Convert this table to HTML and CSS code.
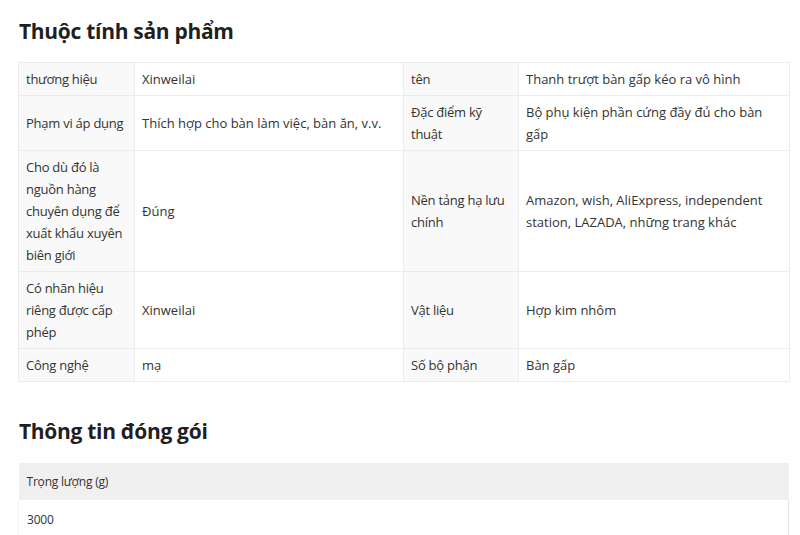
FILE: index.html
```html
<!DOCTYPE html>
<html lang="vi">
<head>
<meta charset="utf-8">
<title>Thuộc tính sản phẩm</title>
<link rel="stylesheet" href="styles.css">
</head>
<body>
<main class="page">
  <h2 class="section-title">Thuộc tính sản phẩm</h2>
  <table class="attr-table">
    <colgroup>
      <col class="c-label1">
      <col class="c-value1">
      <col class="c-label2">
      <col class="c-value2">
    </colgroup>
    <tbody>
      <tr>
        <th>thương hiệu</th>
        <td>Xinweilai</td>
        <th>tên</th>
        <td>Thanh trượt bàn gấp kéo ra vô hình</td>
      </tr>
      <tr>
        <th>Phạm vi áp dụng</th>
        <td>Thích hợp cho bàn làm việc, bàn ăn, v.v.</td>
        <th>Đặc điểm kỹ thuật</th>
        <td>Bộ phụ kiện phần cứng đầy đủ cho bàn gấp</td>
      </tr>
      <tr>
        <th>Cho dù đó là nguồn hàng chuyên dụng để xuất khẩu xuyên biên giới</th>
        <td>Đúng</td>
        <th>Nền tảng hạ lưu chính</th>
        <td>Amazon, wish, AliExpress, independent station, LAZADA, những trang khác</td>
      </tr>
      <tr>
        <th>Có nhãn hiệu riêng được cấp phép</th>
        <td>Xinweilai</td>
        <th>Vật liệu</th>
        <td>Hợp kim nhôm</td>
      </tr>
      <tr>
        <th>Công nghệ</th>
        <td>mạ</td>
        <th>Số bộ phận</th>
        <td>Bàn gấp</td>
      </tr>
    </tbody>
  </table>

  <h2 class="section-title section-title--second">Thông tin đóng gói</h2>
  <table class="pack-table">
    <thead>
      <tr><th>Trọng lượng (g)</th></tr>
    </thead>
    <tbody>
      <tr><td>3000</td></tr>
    </tbody>
  </table>
</main>
</body>
</html>
```

FILE: styles.css
```css
* { box-sizing: border-box; }

html, body {
  margin: 0;
  padding: 0;
  background: #ffffff;
}

body {
  font-family: "Open Sans", "Noto Sans", "Liberation Sans", sans-serif;
  color: #333333;
  height: 535px;
  overflow: hidden;
}

.page {
  width: 771px;
  margin-left: 18px;
  padding-top: 17px;
}

.section-title {
  margin: 0;
  font-size: 21px;
  line-height: 28px;
  font-weight: 700;
  color: #1f1f1f;
  padding-left: 1px;
  letter-spacing: -0.3px;
}

.section-title--second {
  margin-top: 35px;
}

.attr-table {
  width: 771px;
  margin-top: 17px;
  border-collapse: collapse;
  table-layout: fixed;
  font-size: 13px;
  line-height: 22px;
}

.c-label1 { width: 116px; }
.c-value1 { width: 269px; }
.c-label2 { width: 115px; }
.c-value2 { width: 271px; }

.attr-table th,
.attr-table td {
  border: 1px solid #ececec;
  padding: 5px 6px 5px 7px;
  text-align: left;
  vertical-align: middle;
  font-weight: 400;
  color: #333333;
}

.attr-table th {
  background: #f9f9f9;
  letter-spacing: -0.25px;
}

.attr-table td {
  background: #ffffff;
}

.pack-table {
  width: 771px;
  margin-top: 18px;
  border-collapse: collapse;
  font-size: 12px;
  letter-spacing: -0.2px;
}

.pack-table th {
  background: #f0f0f0;
  text-align: left;
  font-weight: 400;
  color: #333333;
  height: 37px;
  padding: 0 8px;
}

.pack-table td {
  height: 38px;
  padding: 0 8px;
  border-left: 1px solid #f2f2f2;
  border-right: 1px solid #e6e6e6;
  color: #333333;
}
```
